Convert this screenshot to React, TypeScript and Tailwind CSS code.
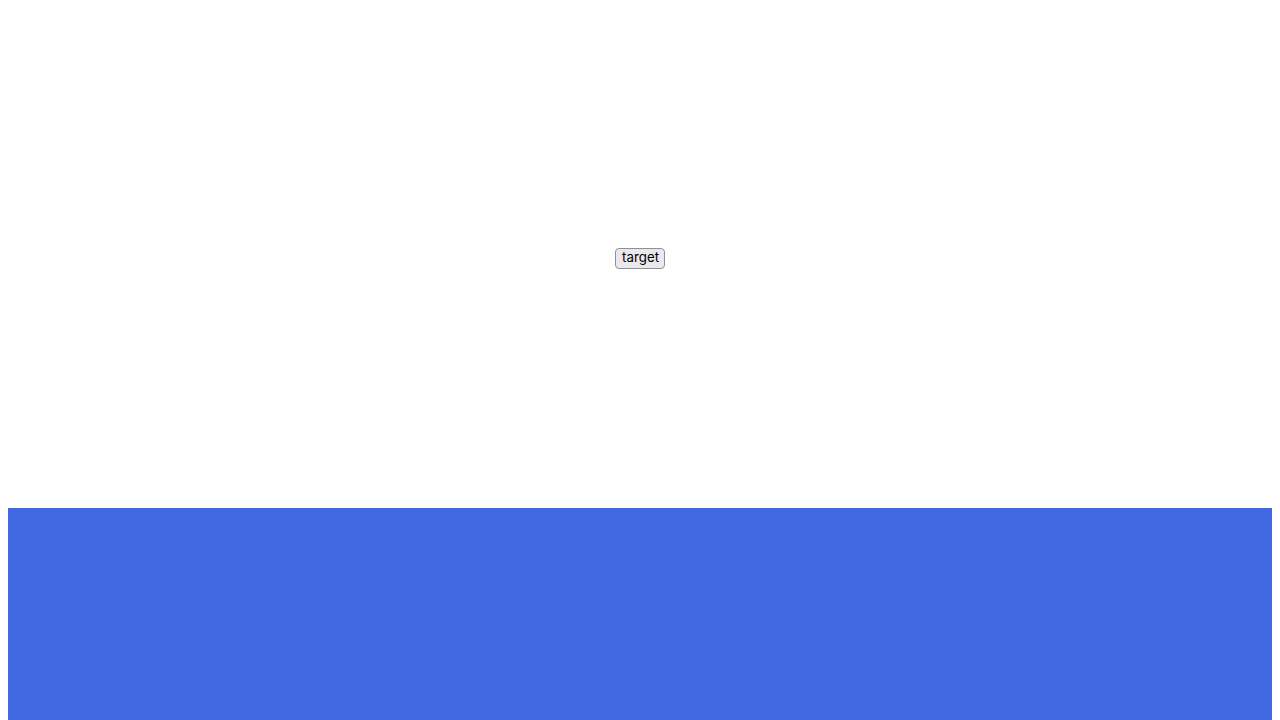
export default function App() {
  return (
    <div className="px-2 pt-2 bg-white h-screen overflow-hidden">
      <div className="h-[500px] flex items-center justify-center">
        <button className="w-[50px] h-[21px] px-[6px] text-[13.33px] leading-none text-black bg-[#e9e9ed] border border-[#8f8f9d] rounded-[4px] font-['Inter',sans-serif]">
          target
        </button>
      </div>
      <div className="h-[212px] bg-[#4169e1]"></div>
    </div>
  );
}
